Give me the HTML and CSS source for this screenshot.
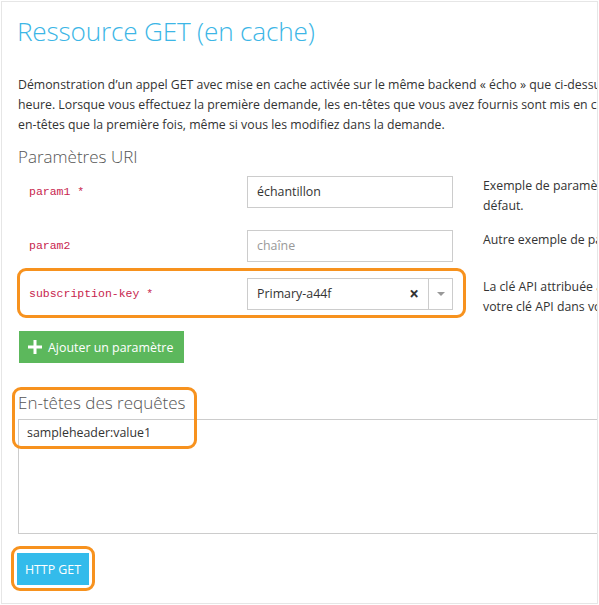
FILE: index.html
```html
<!DOCTYPE html>
<html lang="fr">
<head>
<meta charset="utf-8">
<link rel="stylesheet" href="styles.css">
</head>
<body>
<div class="frame">
  <h1 class="title">Ressource GET (en cache)</h1>
  <p class="desc"><span>Démonstration d’un appel GET avec mise en cache activée sur le même backend « écho » que ci-dessus. La durée de vie du cache est définie sur 1</span><span>heure. Lorsque vous effectuez la première demande, les en-têtes que vous avez fournis sont mis en cache. Les appels suivants retourneront les mêmes</span><span>en-têtes que la première fois, même si vous les modifiez dans la demande.</span></p>

  <h2 class="section">Paramètres URI</h2>

  <div class="param-row">
    <code class="pname">param1 *</code>
    <div class="input">échantillon</div>
    <div class="pdesc"><span>Exemple de paramètre obligatoire avec une valeur par</span><span>défaut.</span></div>
  </div>

  <div class="param-row">
    <code class="pname">param2</code>
    <div class="input placeholder">chaîne</div>
    <div class="pdesc"><span>Autre exemple de paramètre facultatif.</span></div>
  </div>

  <div class="param-row key-row">
    <div class="hl hl-key"></div>
    <code class="pname">subscription-key *</code>
    <div class="input select">
      <span class="sel-val">Primary-a44f</span>
      <span class="sel-clear">×</span>
      <span class="sel-arrow"><span class="caret"></span></span>
    </div>
    <div class="pdesc"><span>La clé API attribuée à votre compte. Vous pouvez trouver</span><span>votre clé API dans votre profil.</span></div>
  </div>

  <button class="btn-add"><svg class="plus" viewBox="0 0 14 14" width="14" height="14"><path d="M7 0v14M0 7h14" stroke="#fff" stroke-width="3"/></svg>Ajouter un paramètre</button>

  <div class="headers">
    <div class="hl hl-headers"></div>
    <h2 class="section hsec">En-têtes des requêtes</h2>
    <div class="textarea">sampleheader:value1</div>
  </div>

  <div class="send">
    <div class="hl hl-send"></div>
    <button class="btn-get">HTTP GET</button>
  </div>
</div>
</body>
</html>
```
FILE: styles.css
```css
html, body { margin: 0; padding: 0; background: #fff; }
body { font-family: "Open Sans", "Noto Sans", sans-serif; color: #333; }
.frame {
  position: relative;
  margin: 1px 0 0 1px;
  height: 601px;
  border: 1px solid #e6e6e6;
  overflow: hidden;
  padding-left: 15px;
  box-sizing: content-box;
  width: 580px;
}
.title {
  margin: 10px 0 0 0;
  font-weight: 300;
  font-size: 26.2px;
  line-height: 38px;
  color: #3cb6e6;
  letter-spacing: -0.2px;
}
.desc {
  margin: 25px 0 0 0;
  font-size: 12.3px;
  line-height: 20px;
  color: #333;
  white-space: nowrap;
  padding-left: 1px;
}
.desc span { display: block; }
.section {
  margin: 10px 0 0 1px;
  font-weight: 300;
  font-size: 17px;
  line-height: 24px;
  color: #555;
}
.param-row {
  position: relative;
  display: flex;
  align-items: flex-start;
  margin-top: 7px;
  margin-left: 1px;
}
.param-row + .param-row { margin-top: 14px; }
.pname {
  width: 218px;
  flex: none;
  padding-left: 11px;
  font-family: "Liberation Mono", monospace;
  font-size: 11.5px;
  line-height: 32px;
  color: #c7254e;
}
.input {
  flex: none;
  box-sizing: border-box;
  width: 206px;
  height: 32px;
  border: 1px solid #ccc;
  padding: 0 9px;
  font-size: 12.4px;
  line-height: 30px;
  color: #333;
  display: flex;
  align-items: center;
}
.input.placeholder { color: #999; }
.pdesc {
  margin-left: 30px;
  font-size: 12.3px;
  line-height: 20px;
  color: #333;
  white-space: nowrap;
}
.pdesc span { display: block; }
.param-row.key-row { margin-top: 16px; }
.key-row .pdesc { margin-top: -1px; }
.select { padding-right: 0; }
.sel-val { flex: 1; }
.sel-clear {
  width: 20px;
  font-size: 17px;
  font-weight: 700;
  color: #333;
  text-align: center;
  margin-right: 4px;
}
.sel-arrow {
  width: 23px;
  height: 30px;
  border-left: 1px solid #ccc;
  display: flex;
  align-items: center;
  justify-content: center;
}
.caret {
  width: 0; height: 0;
  border-left: 4px solid transparent;
  border-right: 4px solid transparent;
  border-top: 4px solid #999;
}
.hl {
  position: absolute;
  border: 3px solid #f7921e;
  border-radius: 9px;
  pointer-events: none;
}
.hl-key { left: -1px; top: -10px; width: 443px; height: 44px; }
.btn-add {
  display: flex;
  align-items: center;
  gap: 6px;
  margin: 14px 0 0 2px;
  width: 165px;
  height: 32px;
  border: 0;
  background: #5cb85c;
  color: #fff;
  font-family: "Open Sans", "Noto Sans", sans-serif;
  font-size: 12.4px;
  padding: 0 0 0 9px;
}
.headers { position: relative; margin-top: 28px; margin-left: 1px; }
.hsec { margin: 0; }
.hl-headers { left: -6px; top: -4px; width: 179px; height: 56px; }
.textarea {
  margin-top: 4px;
  box-sizing: border-box;
  width: 700px;
  height: 115px;
  border: 1px solid #ccc;
  padding: 3px 8px;
  font-size: 12.4px;
  line-height: 20px;
  color: #333;
}
.send { position: relative; margin-top: 19px; margin-left: 1px; display: inline-block; }
.hl-send { left: -7px; top: -7px; width: 78px; height: 39px; }
.btn-get {
  display: block;
  width: 72px;
  height: 32px;
  border: 0;
  margin-left: -1px;
  background: #33bbeb;
  color: #fff;
  font-family: "Open Sans", "Noto Sans", sans-serif;
  font-size: 12.4px;
  padding: 0;
}
```
